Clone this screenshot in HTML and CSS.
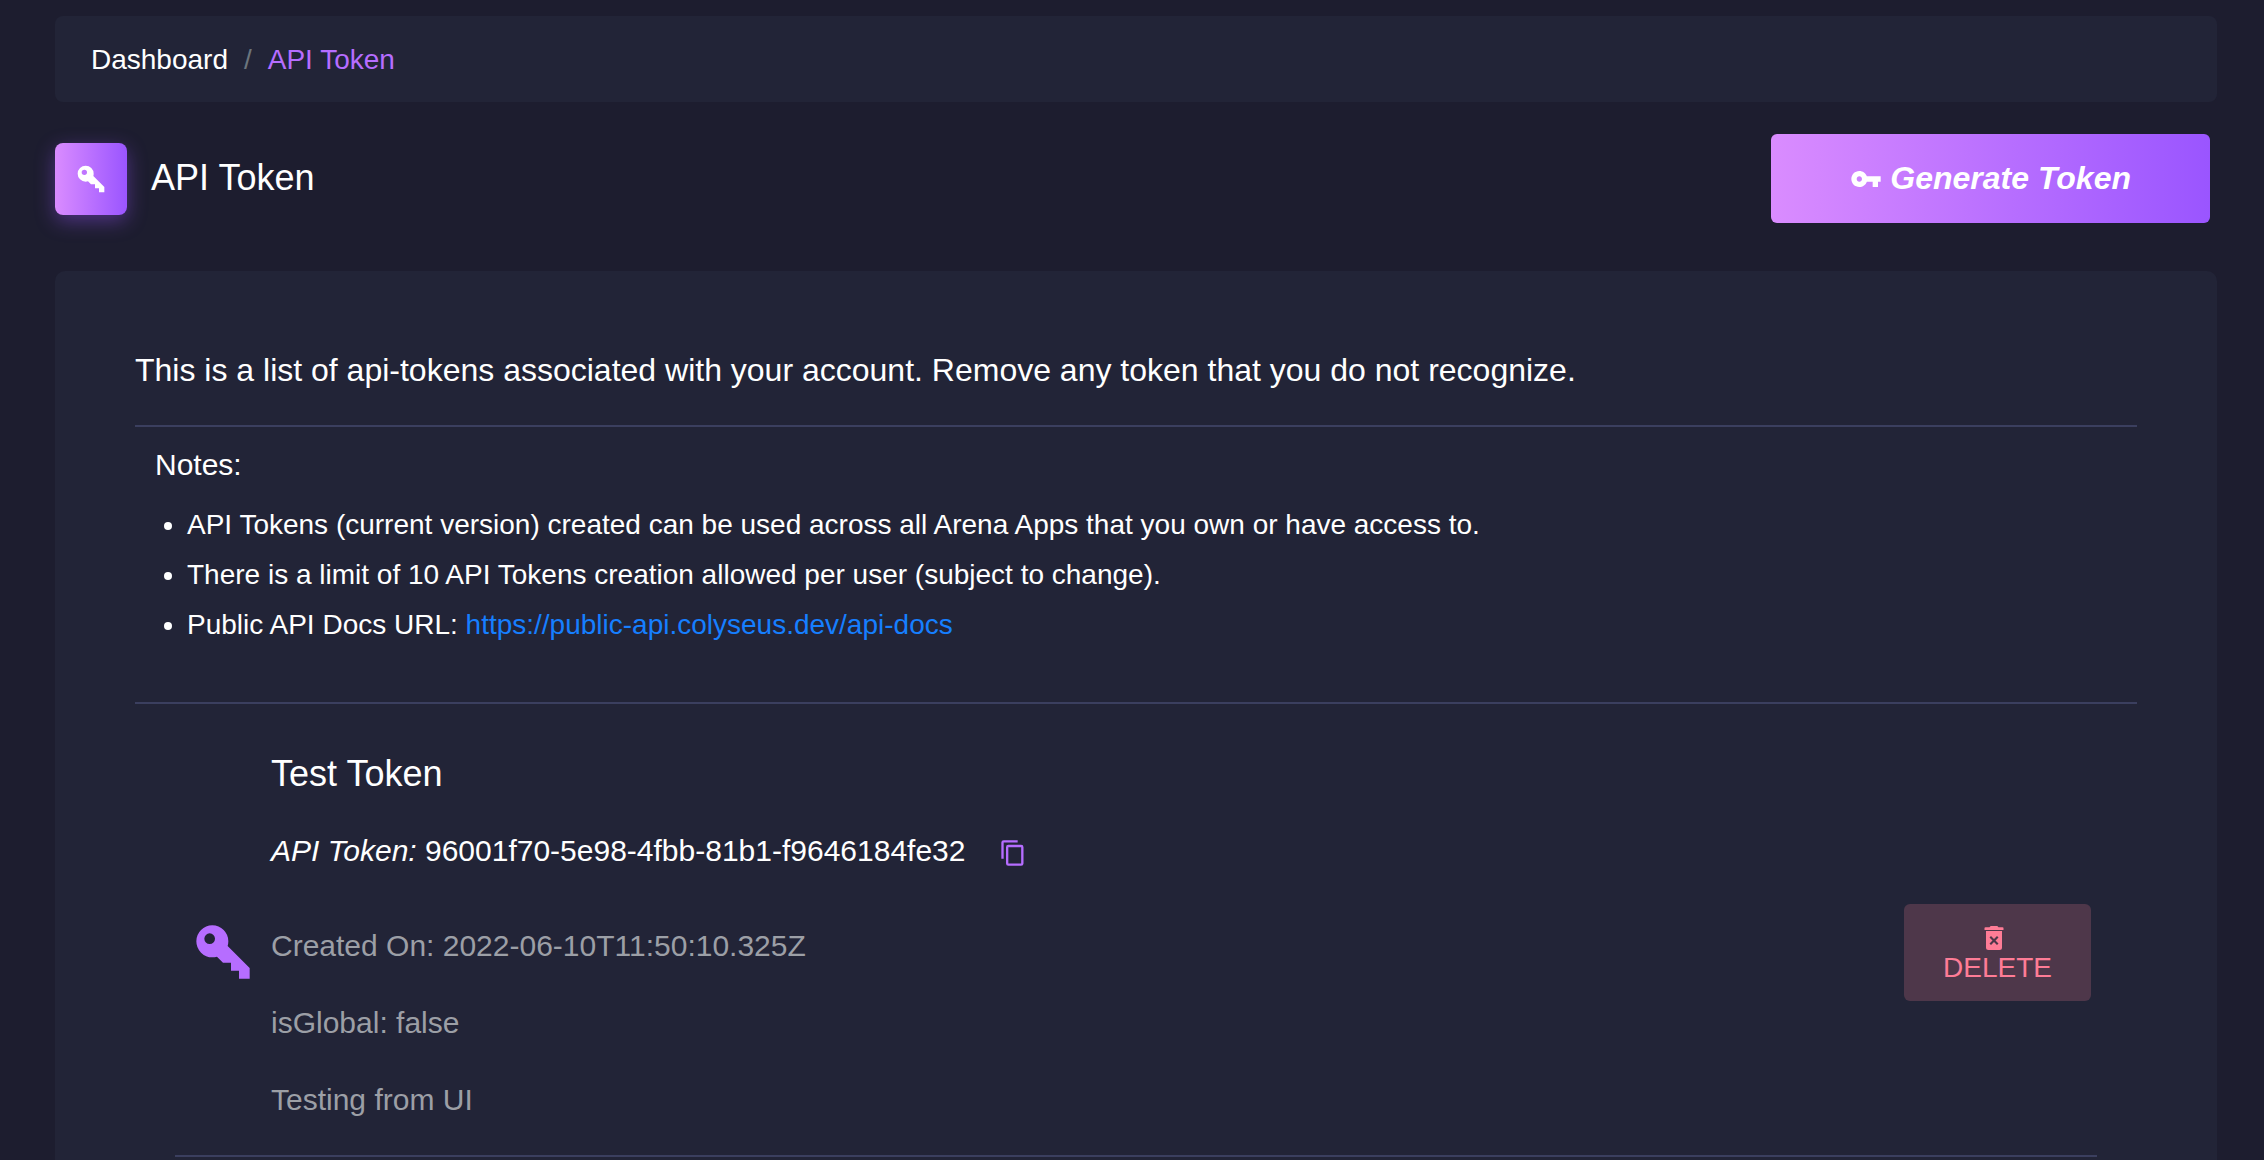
FILE: index.html
```html
<!DOCTYPE html>
<html lang="en">
<head>
<meta charset="utf-8">
<title>API Token</title>
<link rel="stylesheet" href="styles.css">
</head>
<body>
<main class="page">
  <nav class="breadcrumb" aria-label="Breadcrumb">
    <a class="crumb" href="#">Dashboard</a>
    <span class="divider">/</span>
    <span class="crumb current">API Token</span>
  </nav>

  <header class="page-header">
    <div class="page-icon">
      <svg class="icon-md" viewBox="0 0 24 24"><path fill="currentColor" d="M22 18V22H18V19H15V16H12L9.74 13.74C9.19 13.91 8.61 14 8 14A6 6 0 0 1 2 8A6 6 0 0 1 8 2A6 6 0 0 1 14 8C14 8.61 13.91 9.19 13.74 9.74L22 18M7 5A2 2 0 0 0 5 7A2 2 0 0 0 7 9A2 2 0 0 0 9 7A2 2 0 0 0 7 5Z"/></svg>
    </div>
    <h1 class="page-title">API Token</h1>
    <button class="generate" type="button">
      <svg class="icon-md" viewBox="0 0 24 24"><path fill="currentColor" d="M12.65 10C11.83 7.67 9.61 6 7 6c-3.31 0-6 2.69-6 6s2.69 6 6 6c2.61 0 4.83-1.67 5.65-4H17v4h4v-4h2v-4H12.65zM7 14c-1.1 0-2-.9-2-2s.9-2 2-2 2 .9 2 2-.9 2-2 2z"/></svg>
      Generate Token
    </button>
  </header>

  <section class="card">
    <p class="intro">This is a list of api-tokens associated with your account. Remove any token that you do not recognize.</p>
    <div class="notes">
      <h2 class="notes-title">Notes:</h2>
      <ul class="notes-list">
        <li>API Tokens (current version) created can be used across all Arena Apps that you own or have access to.</li>
        <li>There is a limit of 10 API Tokens creation allowed per user (subject to change).</li>
        <li>Public API Docs URL: <a class="docs-link" href="https://public-api.colyseus.dev/api-docs">https://public-api.colyseus.dev/api-docs</a></li>
      </ul>
    </div>
    <article class="token">
      <svg class="icon-lg" viewBox="0 0 24 24"><path fill="currentColor" d="M22 18V22H18V19H15V16H12L9.74 13.74C9.19 13.91 8.61 14 8 14A6 6 0 0 1 2 8A6 6 0 0 1 8 2A6 6 0 0 1 14 8C14 8.61 13.91 9.19 13.74 9.74L22 18M7 5A2 2 0 0 0 5 7A2 2 0 0 0 7 9A2 2 0 0 0 9 7A2 2 0 0 0 7 5Z"/></svg>
      <div class="token-body">
        <h3 class="token-name">Test Token</h3>
        <p class="token-key">
          <span><em>API Token:</em> 96001f70-5e98-4fbb-81b1-f9646184fe32</span>
          <button class="copy" type="button" aria-label="Copy">
            <svg class="icon-sm" viewBox="0 0 24 24"><path fill="currentColor" d="M19 21H8V7H19M19 5H8A2 2 0 0 0 6 7V21A2 2 0 0 0 8 23H19A2 2 0 0 0 21 21V7A2 2 0 0 0 19 5M16 1H4A2 2 0 0 0 2 3V17H4V3H16V1Z"/></svg>
          </button>
        </p>
        <p class="token-meta">Created On: 2022-06-10T11:50:10.325Z</p>
        <p class="token-meta">isGlobal: false</p>
        <p class="token-meta">Testing from UI</p>
      </div>
      <button class="delete" type="button">
        <svg class="icon-sm" viewBox="0 0 28 28">
          <path fill="currentColor" d="M4.5 6V4Q4.500 3.200 5.500 3.200H9.500L10.700 2H17.300L18.500 3.200H22.500Q23.500 3.200 23.500 4V6Z"/>
          <path fill="currentColor" fill-rule="evenodd" d="M6 7H22V23.500Q22 26 19.500 26H8.500Q6 26 6 23.500ZM11 12L9.500 13.500L12.500 16.500L9.500 19.500L11 21L14 18L17 21L18.500 19.500L15.500 16.500L18.500 13.500L17 12L14 15Z"/>
        </svg>
        <span>DELETE</span>
      </button>
    </article>
  </section>
</main>
</body>
</html>
```

FILE: styles.css
```css
* {
  box-sizing: border-box;
}

body {
  margin: 0;
  background: #1d1d2f;
  color: #fff;
  font: 28px/42px "Liberation Sans", Arial, sans-serif;
}

h1, h2, h3, p, ul {
  margin: 0;
  padding: 0;
  font-weight: 400;
}

svg {
  display: block;
  flex: none;
}

button {
  border: 0;
  font-family: inherit;
  cursor: pointer;
}

.icon-sm {
  width: 28px;
  height: 28px;
}

.icon-md {
  width: 32px;
  height: 32px;
}

.icon-lg {
  width: 64px;
  height: 64px;
}

.page {
  min-height: 100vh;
  padding: 16px 47px 0 55px;
  display: flex;
  flex-direction: column;
}

.breadcrumb {
  display: flex;
  align-items: center;
  gap: 16px;
  padding: 23px 36px 21px;
  background: #222437;
  border-radius: 8px;
}

.crumb {
  color: #fff;
  text-decoration: none;
}

.current {
  color: #b66dff;
}

.divider {
  color: #6c757d;
}

.page-header {
  display: flex;
  align-items: center;
  gap: 24px;
  margin: 32px 7px 48px 0;
}

.page-icon {
  display: grid;
  place-items: center;
  width: 72px;
  height: 72px;
  border-radius: 8px;
  background: linear-gradient(to right, #da8cff, #9a55ff);
  box-shadow: 0 6px 20px rgba(154, 85, 255, 0.4);
}

.page-title {
  padding-bottom: 2px;
  font-size: 36px;
  line-height: 42px;
}

.generate {
  display: flex;
  align-items: center;
  gap: 8px;
  margin-left: auto;
  padding: 24px 79px;
  border-radius: 6px;
  background: linear-gradient(to right, #da8cff, #9a55ff);
  color: #fff;
  font-size: 32px;
  font-style: italic;
  font-weight: 700;
  line-height: 41px;
}

.card {
  flex: 1;
  padding: 72px 80px 0;
  background: #222437;
  border-radius: 10px 10px 0 0;
}

.intro {
  padding: 6px 0 34px;
  font-size: 32px;
}

.notes {
  padding: 17px 20px 52px;
  border-top: 2px solid #3b3f5f;
  border-bottom: 2px solid #3b3f5f;
}

.notes-title {
  font-size: 30px;
  line-height: 42px;
}

.notes-list {
  padding: 14px 0 0 32px;
  line-height: 50px;
}

.docs-link {
  color: #167fff;
  text-decoration: none;
}

.token {
  display: flex;
  align-items: center;
  margin: 0 40px;
  padding: 49px 6px 4px 16px;
  border-bottom: 2px solid #3b3f5f;
}

.token-body {
  flex: 1;
  display: flex;
  flex-direction: column;
  gap: 35px;
  padding: 0 0 30px 16px;
  font-size: 30px;
}

.token-name {
  font-size: 36px;
}

.token-key {
  display: flex;
  align-items: center;
  gap: 34px;
  margin-bottom: 18px;
}

.copy {
  padding: 4px 0 0;
  background: none;
  color: #b66dff;
}

.icon-lg {
  color: #b66dff;
}

.token-meta {
  color: #9c9fa6;
}

.delete {
  display: flex;
  flex-direction: column;
  align-items: center;
  gap: 1px;
  padding: 20px 39px 19px;
  border-radius: 6px;
  background: #4e374a;
  color: #fe7c96;
  font-size: 28px;
  line-height: 29px;
}

.delete .icon-sm {
  margin-right: 8px;
}
```
